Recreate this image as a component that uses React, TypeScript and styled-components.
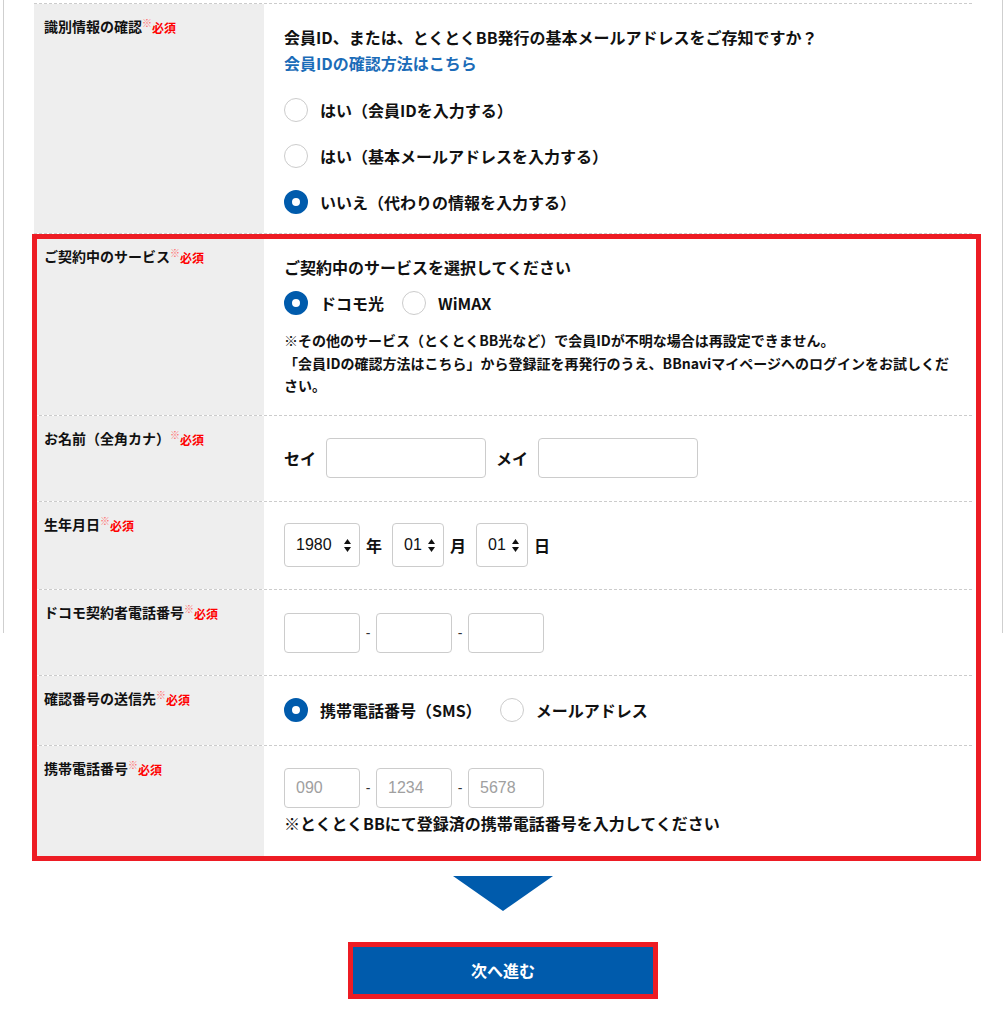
import React, { useState } from 'react';
import styled, { createGlobalStyle } from 'styled-components';

const GlobalStyle = createGlobalStyle`
  * {
    box-sizing: border-box;
  }

  body {
    margin: 0;
    background: #fff;
    color: #111;
    font-family: "Noto Sans CJK JP", "Noto Sans", sans-serif;
  }
`;

type RadioOption = { value: string; label: string };

const identifyOptions: RadioOption[] = [
  { value: 'id', label: 'はい（会員IDを入力する）' },
  { value: 'mail', label: 'はい（基本メールアドレスを入力する）' },
  { value: 'other', label: 'いいえ（代わりの情報を入力する）' },
];

const serviceOptions: RadioOption[] = [
  { value: 'docomo', label: 'ドコモ光' },
  { value: 'wimax', label: 'WiMAX' },
];

const sendOptions: RadioOption[] = [
  { value: 'sms', label: '携帯電話番号（SMS）' },
  { value: 'mail', label: 'メールアドレス' },
];

const years = Array.from({ length: 80 }, (_, i) => String(1940 + i));
const months = Array.from({ length: 12 }, (_, i) => String(i + 1).padStart(2, '0'));
const days = Array.from({ length: 31 }, (_, i) => String(i + 1).padStart(2, '0'));

const SelectArrow: React.FC = () => (
  <ArrowIcon width="7" height="13" viewBox="0 0 7 13">
    <path d="M3.5 0 L7 5 H0 Z" fill="#111" />
    <path d="M0 8 H7 L3.5 13 Z" fill="#111" />
  </ArrowIcon>
);

const DateSelect: React.FC<{
  value: string;
  options: string[];
  width: number;
  onChange: (v: string) => void;
}> = ({ value, options, width, onChange }) => (
  <SelectWrap $width={width}>
    <Select value={value} onChange={(e) => onChange(e.target.value)}>
      {options.map((o) => (
        <option key={o} value={o}>
          {o}
        </option>
      ))}
    </Select>
    <SelectArrow />
  </SelectWrap>
);

const Radio: React.FC<{
  name: string;
  option: RadioOption;
  checked: boolean;
  onSelect: (v: string) => void;
}> = ({ name, option, checked, onSelect }) => (
  <RadioItem>
    <HiddenInput
      type="radio"
      name={name}
      checked={checked}
      onChange={() => onSelect(option.value)}
    />
    <RadioMark $checked={checked} />
    <span>{option.label}</span>
  </RadioItem>
);

const Label: React.FC<{ text: string }> = ({ text }) => (
  <LabelCell>
    {text}
    <Mark>※</Mark>
    <Required>必須</Required>
  </LabelCell>
);

const App: React.FC = () => {
  const [identify, setIdentify] = useState('other');
  const [service, setService] = useState('docomo');
  const [sendTo, setSendTo] = useState('sms');
  const [year, setYear] = useState('1980');
  const [month, setMonth] = useState('01');
  const [day, setDay] = useState('01');

  return (
    <Page>
      <GlobalStyle />
      <FormTable>
        <Row>
          <Label text="識別情報の確認" />
          <FieldCell $pad="20px 20px 19px">
            <Question>会員ID、または、とくとくBB発行の基本メールアドレスをご存知ですか？</Question>
            <HelpLink href="#">会員IDの確認方法はこちら</HelpLink>
            <RadioList>
              {identifyOptions.map((o) => (
                <Radio
                  key={o.value}
                  name="identify"
                  option={o}
                  checked={identify === o.value}
                  onSelect={setIdentify}
                />
              ))}
            </RadioList>
          </FieldCell>
        </Row>

        <HighlightGroup>
          <Row>
            <Label text="ご契約中のサービス" />
            <FieldCell $pad="20px 20px 18px">
              <Question>ご契約中のサービスを選択してください</Question>
              <RadioInline $top={11}>
                {serviceOptions.map((o) => (
                  <Radio
                    key={o.value}
                    name="service"
                    option={o}
                    checked={service === o.value}
                    onSelect={setService}
                  />
                ))}
              </RadioInline>
              <Note>
                ※その他のサービス（とくとくBB光など）で会員IDが不明な場合は再設定できません。
                <br />
                「会員IDの確認方法はこちら」から登録証を再発行のうえ、BBnaviマイページへのログインをお試しください。
              </Note>
            </FieldCell>
          </Row>

          <Row>
            <Label text="お名前（全角カナ）" />
            <FieldCell $pad="22px 20px 23px">
              <InlineFields>
                <FieldLabel>セイ</FieldLabel>
                <TextInput $width={160} type="text" />
                <FieldLabel>メイ</FieldLabel>
                <TextInput $width={160} type="text" />
              </InlineFields>
            </FieldCell>
          </Row>

          <Row>
            <Label text="生年月日" />
            <FieldCell $pad="21px 20px 22px">
              <InlineFields $gap={0}>
                <DateSelect value={year} options={years} width={76} onChange={setYear} />
                <DateUnit>年</DateUnit>
                <DateSelect value={month} options={months} width={52} onChange={setMonth} />
                <DateUnit>月</DateUnit>
                <DateSelect value={day} options={days} width={52} onChange={setDay} />
                <DateUnit>日</DateUnit>
              </InlineFields>
            </FieldCell>
          </Row>

          <Row>
            <Label text="ドコモ契約者電話番号" />
            <FieldCell $pad="23px 20px 22px">
              <InlineFields $gap={0}>
                <TextInput $width={76} type="tel" />
                <Dash>-</Dash>
                <TextInput $width={76} type="tel" />
                <Dash>-</Dash>
                <TextInput $width={76} type="tel" />
              </InlineFields>
            </FieldCell>
          </Row>

          <Row>
            <Label text="確認番号の送信先" />
            <FieldCell $pad="22px 20px 23px">
              <RadioInline $top={0}>
                {sendOptions.map((o) => (
                  <Radio
                    key={o.value}
                    name="sendTo"
                    option={o}
                    checked={sendTo === o.value}
                    onSelect={setSendTo}
                  />
                ))}
              </RadioInline>
            </FieldCell>
          </Row>

          <Row $last>
            <Label text="携帯電話番号" />
            <FieldCell $pad="22px 20px 22px">
              <InlineFields $gap={0}>
                <TextInput $width={76} type="tel" placeholder="090" />
                <Dash>-</Dash>
                <TextInput $width={76} type="tel" placeholder="1234" />
                <Dash>-</Dash>
                <TextInput $width={76} type="tel" placeholder="5678" />
              </InlineFields>
              <PhoneNote>※とくとくBBにて登録済の携帯電話番号を入力してください</PhoneNote>
            </FieldCell>
          </Row>
        </HighlightGroup>
      </FormTable>

      <Footer>
        <DownArrow />
        <NextButton type="button">次へ進む</NextButton>
      </Footer>
    </Page>
  );
};

const Page = styled.div`
  position: relative;
  padding: 3px 0 15px;

  &::before,
  &::after {
    content: '';
    position: absolute;
    top: 0;
    width: 1px;
    height: 633px;
    background: #cfcfcf;
  }

  &::before {
    left: 3px;
  }

  &::after {
    right: 4px;
  }
`;

const FormTable = styled.div`
  width: 938px;
  margin: 0 0 0 34px;
  border-top: 1px dashed #cccccc;
`;

const Row = styled.div<{ $last?: boolean }>`
  display: grid;
  grid-template-columns: 230px 1fr;
  border-bottom: ${(p) => (p.$last ? 'none' : '1px dashed #cccccc')};
`;

const LabelCell = styled.div`
  background: #eeeeee;
  padding: 12px 10px;
  font-size: 14px;
  line-height: 20px;
  font-weight: 700;
  color: #111;
`;

const Mark = styled.span`
  font-size: 10px;
  color: #ff6b6b;
  vertical-align: top;
  line-height: 14px;
  font-weight: 400;
`;

const Required = styled.span`
  font-size: 12px;
  color: #ff0000;
  font-weight: 700;
  position: relative;
  top: 1px;
`;

const FieldCell = styled.div<{ $pad: string }>`
  padding: ${(p) => p.$pad};
  background: #fff;
`;

const Question = styled.div`
  font-size: 16px;
  line-height: 26px;
  font-weight: 700;
  color: #111;
`;

const HelpLink = styled.a`
  display: block;
  font-size: 16px;
  line-height: 26px;
  font-weight: 700;
  color: #1b6cb8;
  text-decoration: none;
`;

const RadioList = styled.div`
  display: flex;
  flex-direction: column;
  gap: 22px;
  margin-top: 22px;
`;

const RadioInline = styled.div<{ $top: number }>`
  display: flex;
  align-items: center;
  gap: 18px;
  margin-top: ${(p) => p.$top}px;
`;

const RadioItem = styled.label`
  display: flex;
  align-items: center;
  gap: 12px;
  height: 24px;
  font-size: 16px;
  font-weight: 700;
  color: #111;
  cursor: pointer;
`;

const HiddenInput = styled.input`
  display: none;
`;

const RadioMark = styled.span<{ $checked: boolean }>`
  width: 24px;
  height: 24px;
  border-radius: 50%;
  background: #fff;
  flex-shrink: 0;
  border: ${(p) => (p.$checked ? '8px solid #005bac' : '1px solid #cccccc')};
`;

const Note = styled.p`
  margin: 14px 0 0;
  font-size: 14px;
  line-height: 22.5px;
  font-weight: 700;
  color: #111;
`;

const InlineFields = styled.div<{ $gap?: number }>`
  display: flex;
  align-items: center;
  gap: ${(p) => (p.$gap === undefined ? 10 : p.$gap)}px;
`;

const FieldLabel = styled.span`
  font-size: 16px;
  font-weight: 700;
  color: #111;
`;

const TextInput = styled.input<{ $width: number }>`
  width: ${(p) => p.$width}px;
  height: 40px;
  border: 1px solid #cccccc;
  border-radius: 4px;
  padding: 0 11px;
  font-family: "Liberation Sans", Arial, sans-serif;
  font-size: 16px;
  color: #111;
  background: #fff;
  outline: none;

  &::placeholder {
    color: #a0a0a0;
  }
`;

const Dash = styled.span`
  width: 16px;
  text-align: center;
  font-family: "Liberation Sans", Arial, sans-serif;
  font-size: 14px;
  color: #333;
`;

const SelectWrap = styled.div<{ $width: number }>`
  position: relative;
  width: ${(p) => p.$width}px;
  height: 44px;
`;

const Select = styled.select`
  appearance: none;
  width: 100%;
  height: 100%;
  border: 1px solid #cccccc;
  border-radius: 4px;
  padding: 0 20px 0 11px;
  background: #fff;
  font-family: "Liberation Sans", Arial, sans-serif;
  font-size: 16px;
  color: #111;
  outline: none;
  cursor: pointer;
`;

const ArrowIcon = styled.svg`
  position: absolute;
  right: 9px;
  top: 16px;
  pointer-events: none;
`;

const DateUnit = styled.span`
  margin: 0 10px 0 6px;
  font-size: 16px;
  font-weight: 700;
  color: #111;
`;

const PhoneNote = styled.div`
  margin-top: 3px;
  font-size: 16px;
  line-height: 24px;
  font-weight: 700;
  color: #111;
`;

const HighlightGroup = styled.div`
  position: relative;

  &::after {
    content: '';
    position: absolute;
    top: 0;
    left: -2px;
    right: -9px;
    bottom: -4px;
    border: 5px solid #ed1c24;
    pointer-events: none;
  }
`;

const Footer = styled.div`
  display: flex;
  flex-direction: column;
  align-items: center;
  padding-top: 19px;
  margin-left: 34px;
  width: 938px;
`;

const DownArrow = styled.div`
  width: 0;
  height: 0;
  border-left: 50px solid transparent;
  border-right: 50px solid transparent;
  border-top: 35px solid #005bac;
`;

const NextButton = styled.button`
  margin-top: 36px;
  width: 300px;
  height: 47px;
  border: none;
  border-radius: 0;
  background: #005bac;
  color: #fff;
  font-family: "Noto Sans CJK JP", sans-serif;
  font-size: 16px;
  font-weight: 700;
  outline: 5px solid #ed1c24;
  cursor: pointer;
`;

export default App;
